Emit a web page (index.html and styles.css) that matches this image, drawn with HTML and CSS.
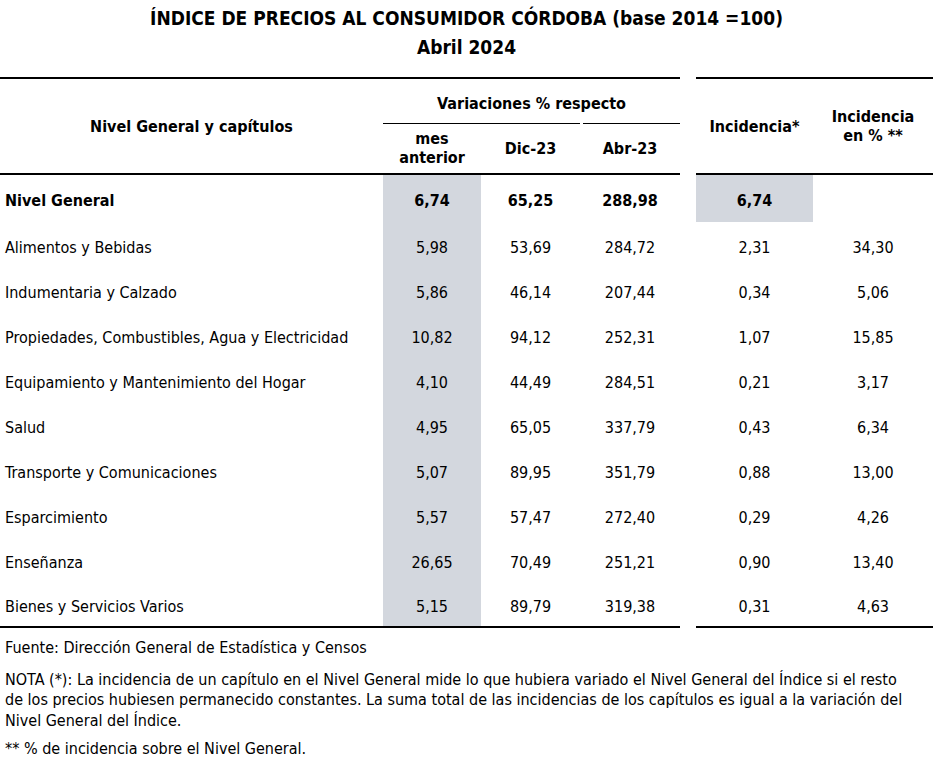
FILE: index.html
```html
<!DOCTYPE html>
<html lang="es">
<head>
<meta charset="utf-8">
<title>IPC Córdoba</title>
<link rel="stylesheet" href="styles.css">
</head>
<body>
<div class="page">
  <header class="titles">
    <h1>ÍNDICE DE PRECIOS AL CONSUMIDOR CÓRDOBA (base 2014 =100)</h1>
    <h2>Abril 2024</h2>
  </header>
  <table class="ipc">
    <colgroup>
      <col class="c-name"><col class="c-mes"><col class="c-dic"><col class="c-abr"><col class="c-gap"><col class="c-inc"><col class="c-pct">
    </colgroup>
    <thead>
      <tr class="h1">
        <th rowspan="2" class="hname">Nivel General y capítulos</th>
        <th colspan="3" class="hvar">Variaciones % respecto</th>
        <th rowspan="2" class="gap"></th>
        <th rowspan="2" class="hinc">Incidencia*</th>
        <th rowspan="2" class="hinc">Incidencia<br>en % **</th>
      </tr>
      <tr class="h2">
        <th class="sub">mes<br>anterior</th>
        <th class="sub">Dic-23</th>
        <th class="sub sub-last">Abr-23</th>
      </tr>
    </thead>
    <tbody>
      <tr class="first">
        <td class="name">Nivel General</td>
        <td class="shade">6,74</td><td>65,25</td><td>288,98</td><td class="gap"></td><td class="shade">6,74</td><td></td>
      </tr>
      <tr><td class="name">Alimentos y Bebidas</td><td class="shade">5,98</td><td>53,69</td><td>284,72</td><td class="gap"></td><td>2,31</td><td>34,30</td></tr>
      <tr><td class="name">Indumentaria y Calzado</td><td class="shade">5,86</td><td>46,14</td><td>207,44</td><td class="gap"></td><td>0,34</td><td>5,06</td></tr>
      <tr><td class="name">Propiedades, Combustibles, Agua y Electricidad</td><td class="shade">10,82</td><td>94,12</td><td>252,31</td><td class="gap"></td><td>1,07</td><td>15,85</td></tr>
      <tr><td class="name">Equipamiento y Mantenimiento del Hogar</td><td class="shade">4,10</td><td>44,49</td><td>284,51</td><td class="gap"></td><td>0,21</td><td>3,17</td></tr>
      <tr><td class="name">Salud</td><td class="shade">4,95</td><td>65,05</td><td>337,79</td><td class="gap"></td><td>0,43</td><td>6,34</td></tr>
      <tr><td class="name">Transporte y Comunicaciones</td><td class="shade">5,07</td><td>89,95</td><td>351,79</td><td class="gap"></td><td>0,88</td><td>13,00</td></tr>
      <tr><td class="name">Esparcimiento</td><td class="shade">5,57</td><td>57,47</td><td>272,40</td><td class="gap"></td><td>0,29</td><td>4,26</td></tr>
      <tr><td class="name">Enseñanza</td><td class="shade">26,65</td><td>70,49</td><td>251,21</td><td class="gap"></td><td>0,90</td><td>13,40</td></tr>
      <tr class="last"><td class="name">Bienes y Servicios Varios</td><td class="shade">5,15</td><td>89,79</td><td>319,38</td><td class="gap"></td><td>0,31</td><td>4,63</td></tr>
    </tbody>
  </table>
  <footer class="notes">
    <p class="source">Fuente: Dirección General de Estadística y Censos</p>
    <p class="note">NOTA (*): La incidencia de un capítulo en el Nivel General mide lo que hubiera variado el Nivel General del Índice si el resto de los precios hubiesen permanecido constantes. La suma total de las incidencias de los capítulos es igual a la variación del Nivel General del Índice.</p>
    <p class="note2">** % de incidencia sobre el Nivel General.</p>
  </footer>
</div>
</body>
</html>
```
FILE: styles.css
```css
html, body {
  margin: 0;
  padding: 0;
  background: #fff;
}
body {
  font-family: "DejaVu Sans Condensed", "DejaVu Sans", sans-serif;
  font-size: 16px;
  color: #000;
}
.page {
  width: 933px;
}
.titles {
  text-align: center;
  padding-top: 6px;
}
.titles h1 {
  margin: 0;
  font-size: 19px;
  font-weight: bold;
  line-height: 24px;
}
.titles h2 {
  margin: 5px 0 0;
  font-size: 19px;
  font-weight: bold;
  line-height: 24px;
}
.ipc {
  margin-top: 18px;
  width: 933px;
  border-collapse: collapse;
  table-layout: fixed;
}
.c-name { width: 383px; }
.c-mes { width: 98px; }
.c-dic { width: 99px; }
.c-abr { width: 100px; }
.c-gap { width: 16px; }
.c-inc { width: 117px; }
.c-pct { width: 120px; }
.ipc th, .ipc td {
  padding: 0;
  text-align: center;
  vertical-align: middle;
}
.ipc thead th {
  font-weight: bold;
  line-height: 19px;
}
.ipc thead tr.h1 th {
  border-top: 2px solid #000;
}
.ipc thead tr.h1 th.gap,
.ipc tbody td.gap {
  border: none;
}
.ipc thead tr.h1 {
  height: 45px;
}
.ipc thead tr.h2 {
  height: 51px;
}
.ipc thead th.hname,
.ipc thead th.hinc,
.ipc thead tr.h2 th {
  border-bottom: 2px solid #000;
}
.ipc thead th.hvar {
  padding-top: 5px;
}
.ipc thead tr.h2 th.sub {
  border-top: 1px solid #000;
}
.ipc thead tr.h2 th.sub-last {
  border-top: none;
  background: linear-gradient(#000, #000) no-repeat right top / calc(100% - 3px) 1px;
}
.ipc tbody tr {
  height: 45px;
}
.ipc tbody td {
  padding-top: 5px;
}
.ipc tbody tr.first {
  height: 48px;
  font-weight: bold;
}
.ipc tbody tr.first td {
  padding-top: 4px;
}
.ipc tbody tr.last td {
  border-bottom: 2px solid #000;
}
.ipc tbody tr.last td.gap {
  border-bottom: none;
}
.ipc tbody td.name {
  text-align: left;
  padding-left: 5px;
}
.ipc td.shade {
  background: #d3d7de;
}
.notes {
  padding-left: 5px;
}
.notes p {
  margin: 0;
  line-height: 20.5px;
}
.notes .source {
  margin-top: 10px;
}
.notes .note {
  margin-top: 11px;
  padding-right: 20px;
}
.notes .note2 {
  margin-top: 8px;
}
```
